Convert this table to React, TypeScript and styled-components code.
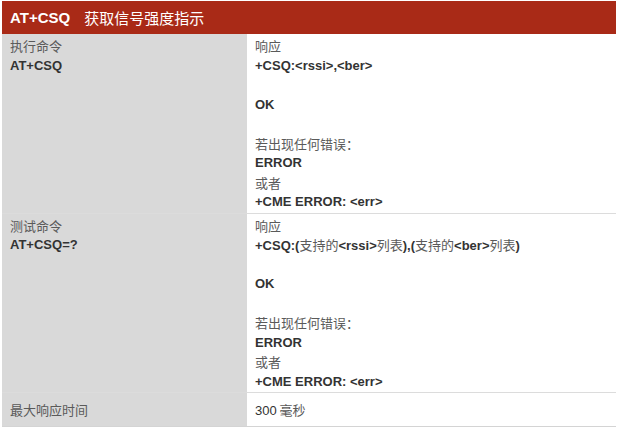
import React from "react";
import styled, { createGlobalStyle } from "styled-components";

const GlobalStyle = createGlobalStyle`
  html, body {
    margin: 0;
    padding: 0;
    background: #ffffff;
  }
  body {
    font-family: "Liberation Sans", Arial, "Noto Sans CJK SC", sans-serif;
    font-size: 13px;
    color: #333333;
  }
`;

interface LineProps {
  kind?: "label" | "code" | "blank";
}

const rows: { label: string; cmd: string; lines: React.ReactNode[]; pad?: number }[] = [
  {
    label: "执行命令",
    cmd: "AT+CSQ",
    lines: [
      ["label", "响应"],
      ["code", "+CSQ:<rssi>,<ber>"],
      ["blank", ""],
      ["code", "OK"],
      ["blank", ""],
      ["label", "若出现任何错误："],
      ["code", "ERROR"],
      ["label", "或者"],
      ["code", "+CME ERROR: <err>"],
    ],
  },
  {
    label: "测试命令",
    cmd: "AT+CSQ=?",
    lines: [
      ["label", "响应"],
      [
        "code",
        <>
          +CSQ:(<Plain>支持的</Plain>&lt;rssi&gt;<Plain>列表</Plain>),(
          <Plain>支持的</Plain>&lt;ber&gt;<Plain>列表</Plain>)
        </>,
      ],
      ["blank", ""],
      ["code", "OK"],
      ["blank", ""],
      ["label", "若出现任何错误："],
      ["code", "ERROR"],
      ["label", "或者"],
      ["code", "+CME ERROR: <err>"],
    ],
  },
];

function Plain({ children }: { children: React.ReactNode }) {
  return <PlainText>{children}</PlainText>;
}

const App: React.FC = () => {
  return (
    <>
      <GlobalStyle />
      <Page>
        <Table>
          <Header>
            <HeaderCmd>AT+CSQ</HeaderCmd>
            <HeaderTitle>获取信号强度指示</HeaderTitle>
          </Header>
          {rows.map((row) => (
            <Row key={row.cmd}>
              <LeftCell pad={2}>
                <Line kind="label">{row.label}</Line>
                <Line kind="code">{row.cmd}</Line>
              </LeftCell>
              <RightCell pad={2}>
                {row.lines.map((l, i) => {
                  const [kind, content] = l as [LineProps["kind"], React.ReactNode];
                  return (
                    <Line key={i} kind={kind}>
                      {content}
                    </Line>
                  );
                })}
              </RightCell>
            </Row>
          ))}
          <Row last>
            <LeftCell pad={7}>
              <Line kind="label">最大响应时间</Line>
            </LeftCell>
            <RightCell pad={7}>
              <Line kind="label">
                <Num>300</Num> 毫秒
              </Line>
            </RightCell>
          </Row>
        </Table>
      </Page>
    </>
  );
};

export default App;

const Page = styled.div`
  padding: 1px 2px 0 2px;
  width: 614px;
`;

const Table = styled.div`
  display: flex;
  flex-direction: column;
  border-bottom: 1px solid #d4d4d4;
`;

const Header = styled.div`
  display: flex;
  align-items: center;
  height: 33px;
  padding-left: 8px;
  background-color: #a92a17;
  color: #ffffff;
`;

const HeaderCmd = styled.span`
  font-weight: 700;
  font-size: 15px;
  margin-right: 14px;
`;

const HeaderTitle = styled.span`
  font-family: "Noto Sans CJK SC", sans-serif;
  font-size: 15px;
`;

const Row = styled.div<{ last?: boolean }>`
  display: grid;
  grid-template-columns: 245px 1fr;
  border-bottom: ${(p) => (p.last ? "none" : "1px solid #dcdcdc")};
`;

const LeftCell = styled.div<{ pad: number }>`
  background-color: #d9d9d9;
  padding: ${(p) => `${p.pad}px 8px ${p.pad - 1}px 8px`};
`;

const RightCell = styled.div<{ pad: number }>`
  background-color: #ffffff;
  padding: ${(p) => `${p.pad}px 8px ${p.pad - 1}px 8px`};
`;

const Line = styled.div<LineProps>`
  height: 19.5px;
  line-height: 19.5px;
  white-space: pre;
  font-size: 13px;
  font-weight: ${(p) => (p.kind === "code" ? 700 : 400)};
  color: ${(p) => (p.kind === "code" ? "#333333" : "#5a5a5a")};
  font-family: ${(p) =>
    p.kind === "label"
      ? `"Noto Sans CJK SC", sans-serif`
      : `"Liberation Sans", Arial, "Noto Sans CJK SC", sans-serif`};
`;

const PlainText = styled.span`
  font-family: "Noto Sans CJK SC", sans-serif;
  font-weight: 400;
  color: #5a5a5a;
`;

const Num = styled.span`
  font-family: "Liberation Sans", Arial, sans-serif;
  color: #333333;
`;
